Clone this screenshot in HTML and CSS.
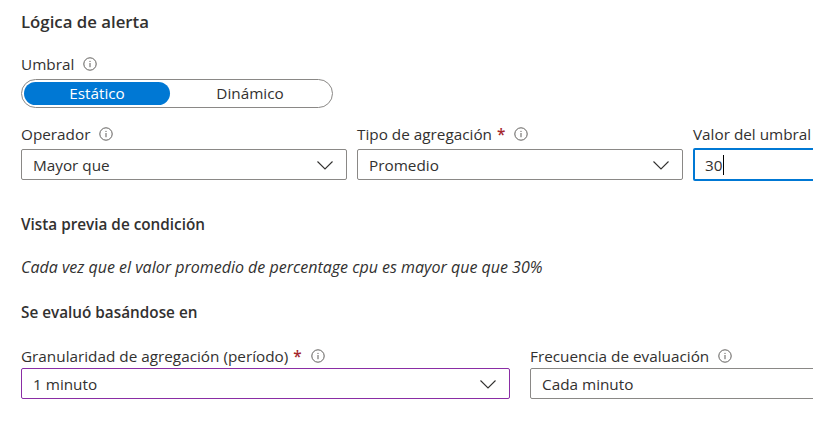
FILE: index.html
```html
<!DOCTYPE html>
<html lang="es">
<head>
<meta charset="utf-8">
<link rel="stylesheet" href="styles.css">
</head>
<body>
<div class="page">
  <h2 class="title">Lógica de alerta</h2>

  <div class="field-label umbral-label">Umbral <span class="info"><svg viewBox="0 0 14 14" width="14" height="14"><circle cx="7" cy="7" r="6.2" fill="none" stroke="#605e5c" stroke-width="1"/><rect x="6.5" y="6" width="1" height="4.2" fill="#605e5c"/><circle cx="7" cy="4.3" r="0.65" fill="#605e5c"/></svg></span></div>
  <div class="toggle">
    <div class="toggle-opt active">Estático</div>
    <div class="toggle-opt">Dinámico</div>
  </div>

  <div class="row row-top">
    <div class="field">
      <div class="field-label">Operador <span class="info"><svg viewBox="0 0 14 14" width="14" height="14"><circle cx="7" cy="7" r="6.2" fill="none" stroke="#605e5c" stroke-width="1"/><rect x="6.5" y="6" width="1" height="4.2" fill="#605e5c"/><circle cx="7" cy="4.3" r="0.65" fill="#605e5c"/></svg></span></div>
      <div class="box select"><span>Mayor que</span><svg class="chev" viewBox="0 0 16 9" width="16" height="9"><path d="M0.5 0.5 L8 8 L15.5 0.5" fill="none" stroke="#323130" stroke-width="1.1"/></svg></div>
    </div>
    <div class="field">
      <div class="field-label">Tipo de agregación<span class="req">*</span> <span class="info"><svg viewBox="0 0 14 14" width="14" height="14"><circle cx="7" cy="7" r="6.2" fill="none" stroke="#605e5c" stroke-width="1"/><rect x="6.5" y="6" width="1" height="4.2" fill="#605e5c"/><circle cx="7" cy="4.3" r="0.65" fill="#605e5c"/></svg></span></div>
      <div class="box select"><span>Promedio</span><svg class="chev" viewBox="0 0 16 9" width="16" height="9"><path d="M0.5 0.5 L8 8 L15.5 0.5" fill="none" stroke="#323130" stroke-width="1.1"/></svg></div>
    </div>
    <div class="field">
      <div class="field-label">Valor del umbral</div>
      <div class="box focus"><span>30</span><span class="caret"></span></div>
    </div>
  </div>

  <h3 class="section">Vista previa de condición</h3>
  <p class="preview">Cada vez que el valor promedio de percentage cpu es mayor que que 30%</p>

  <h3 class="section section2">Se evaluó basándose en</h3>

  <div class="row row-bottom">
    <div class="field">
      <div class="field-label">Granularidad de agregación (período)<span class="req">*</span> <span class="info"><svg viewBox="0 0 14 14" width="14" height="14"><circle cx="7" cy="7" r="6.2" fill="none" stroke="#605e5c" stroke-width="1"/><rect x="6.5" y="6" width="1" height="4.2" fill="#605e5c"/><circle cx="7" cy="4.3" r="0.65" fill="#605e5c"/></svg></span></div>
      <div class="box select purple"><span>1 minuto</span><svg class="chev" viewBox="0 0 16 9" width="16" height="9"><path d="M0.5 0.5 L8 8 L15.5 0.5" fill="none" stroke="#323130" stroke-width="1.1"/></svg></div>
    </div>
    <div class="field">
      <div class="field-label">Frecuencia de evaluación <span class="info"><svg viewBox="0 0 14 14" width="14" height="14"><circle cx="7" cy="7" r="6.2" fill="none" stroke="#605e5c" stroke-width="1"/><rect x="6.5" y="6" width="1" height="4.2" fill="#605e5c"/><circle cx="7" cy="4.3" r="0.65" fill="#605e5c"/></svg></span></div>
      <div class="box select"><span>Cada minuto</span></div>
    </div>
  </div>
</div>
</body>
</html>
```

FILE: styles.css
```css
html, body {
  margin: 0;
  padding: 0;
  background: #ffffff;
  overflow: hidden;
}
body {
  width: 813px;
  height: 438px;
  font-family: "Open Sans", "Noto Sans", sans-serif;
  color: #323130;
  font-size: 15.3px;
}
.page {
  box-sizing: border-box;
  padding: 10px 0 0 21px;
  width: 813px;
  height: 438px;
  overflow: hidden;
}
.title {
  margin: 0;
  font-size: 16.8px;
  font-weight: 600;
  line-height: 24px;
  height: 24px;
}
.field-label {
  line-height: 20px;
  height: 20px;
  display: flex;
  align-items: center;
  white-space: nowrap;
}
.umbral-label {
  margin-top: 20px;
}
.info {
  display: inline-flex;
  margin-left: 9px;
}
.req {
  color: #a4262c;
  margin-left: 5px;
  font-weight: 600;
}
.toggle {
  margin-top: 5px;
  width: 312px;
  height: 29px;
  box-sizing: border-box;
  border: 1px solid #8a8886;
  border-radius: 15px;
  padding: 2px;
  display: flex;
}
.toggle-opt {
  width: 146px;
  height: 23px;
  line-height: 23px;
  text-align: center;
  border-radius: 12px;
  color: #323130;
}
.toggle-opt.active {
  background: #0078d4;
  color: #ffffff;
}
.toggle-opt + .toggle-opt {
  flex: 1;
}
.row {
  display: grid;
}
.row-top {
  margin-top: 16px;
  grid-template-columns: 326px 326px 300px;
  column-gap: 10px;
}
.row-bottom {
  margin-top: 24px;
  grid-template-columns: 489px 400px;
  column-gap: 20px;
}
.field .field-label {
  margin-bottom: 5px;
}
.row-bottom .field .field-label {
  margin-bottom: 2px;
}
.box {
  height: 31px;
  box-sizing: border-box;
  border: 1px solid #8a8886;
  border-radius: 2px;
  display: flex;
  align-items: center;
  padding: 1px 13px 0 11px;
}
.select {
  justify-content: space-between;
}
.chev {
  display: block;
}
.box.focus {
  border: 2px solid #0078d4;
  padding-left: 10px;
  height: 33px;
  margin-top: -1px;
  justify-content: flex-start;
}
.caret {
  display: inline-block;
  width: 1.5px;
  height: 20px;
  background: #000;
  margin-left: 0;
}
.box.purple {
  border-color: #8a2da5;
}
.section {
  margin: 33px 0 0 0;
  font-size: 15.3px;
  font-weight: 600;
  line-height: 20px;
}
.section2 {
  margin-top: 25px;
}
.preview {
  margin: 23px 0 0 0;
  font-style: italic;
  line-height: 20px;
  font-size: 16px;
}
```
